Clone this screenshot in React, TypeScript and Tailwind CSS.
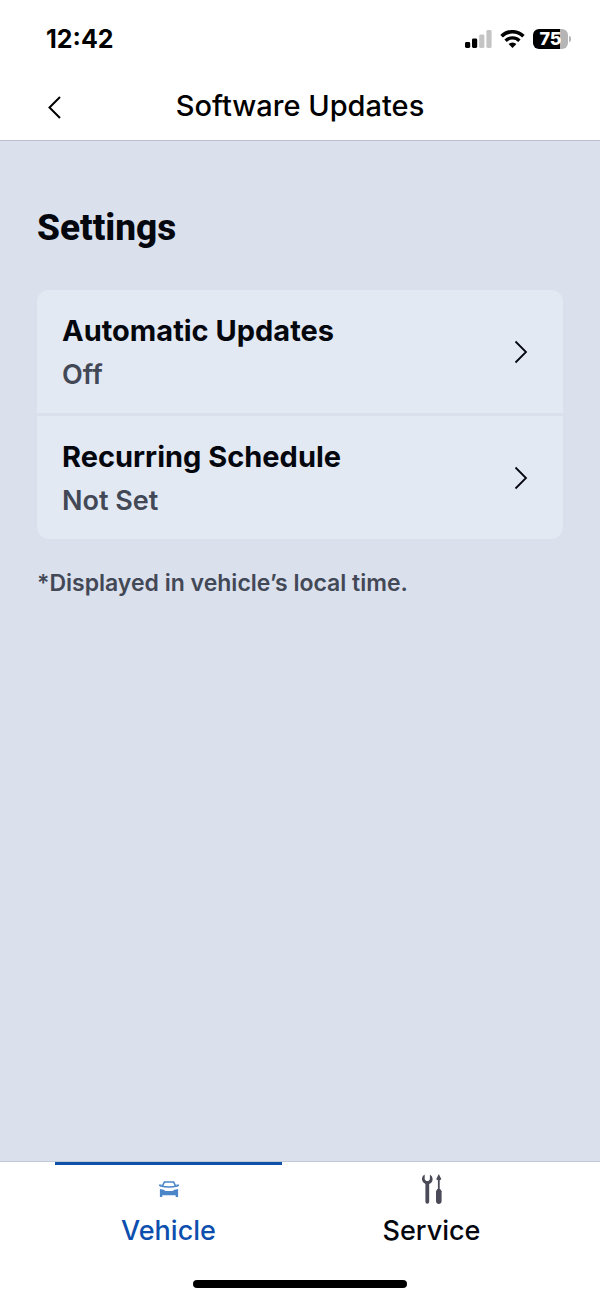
import type { ReactNode } from 'react';
import clsx from 'clsx';

const settings = [
  { title: 'Automatic Updates', value: 'Off' },
  { title: 'Recurring Schedule', value: 'Not Set' },
];

function StatusBar() {
  return (
    <div className="flex h-[74px] items-center justify-between pt-[3px] pl-[46px] pr-[29px]">
      <span className="text-[25px] leading-8 font-bold text-black">12:42</span>
      <div className="flex items-center gap-2">
        <svg className="h-[18px] w-[27px]" viewBox="0 0 27 18" aria-hidden="true">
          <rect x="0" y="12" width="5.2" height="6" rx="1.4" fill="#000" />
          <rect x="7" y="8.5" width="5.2" height="9.5" rx="1.4" fill="#000" />
          <rect x="14.2" y="4.5" width="5.2" height="13.5" rx="1.4" fill="#c4c4c4" />
          <rect x="21.4" y="0" width="5.2" height="18" rx="1.4" fill="#c4c4c4" />
        </svg>
        <svg className="h-[18px] w-[25px]" viewBox="0 0 25 18" fill="none" aria-hidden="true">
          <path d="M1.6 6.2a15.6 15.6 0 0 1 21.8 0" stroke="#000" strokeWidth="3.6" />
          <path d="M5.6 10.7a9.9 9.9 0 0 1 13.8 0" stroke="#000" strokeWidth="3.4" />
          <path d="M12.5 18l-3.9-4a5.6 5.6 0 0 1 7.8 0z" fill="#000" />
        </svg>
        <div className="flex items-center gap-px">
          <div className="flex h-5 w-[35px] items-center justify-center rounded-md bg-linear-to-r from-black from-78% to-[#b5b5b5] to-78% text-lg leading-5 font-extrabold text-white">
            75
          </div>
          <div className="h-[6px] w-[2px] rounded-r-full bg-[#b5b5b5]" />
        </div>
      </div>
    </div>
  );
}

function ChevronRight() {
  return (
    <svg className="h-6 w-4" viewBox="0 0 16 24" fill="none" stroke="#05070f" strokeWidth="1.8" aria-hidden="true">
      <path d="M2.5 1.5L13 12L2.5 22.5" />
    </svg>
  );
}

function CarIcon() {
  return (
    <svg className="h-4 w-5" viewBox="0 0 20 16" fill="#4a86c8" aria-hidden="true">
      <path d="M3.4 5.2L5.4 1H14.6L16.6 5.2" fill="none" stroke="#4a86c8" strokeWidth="1.6" />
      <path d="M0 3.5h2.8l-.5 1.1Q10 5.8 17.7 4.6l-.5-1.1H20v1.3l-1.5 1Q10 7.6 1.5 5.8L0 4.8z" />
      <path d="M.9 7.9Q5.3 8.4 6.5 9.9h7Q14.7 8.4 19.1 7.9V16h-2.4v-1.7H3.3V16H.9z" />
    </svg>
  );
}

function ToolsIcon() {
  return (
    <svg className="h-[30px] w-5" viewBox="0 0 20 30" fill="#4a4a58" aria-hidden="true">
      <path d="M2.7.4A5.3 5.3 0 0 0 3.4 10V27.8a1.9 1.9 0 0 0 3.8 0V10A5.3 5.3 0 0 0 7.9.4V5.2L6.5 7H4.1L2.7 5.2z" />
      <path d="M16.8 0L19.4 5.2L17.7 6.2V15.2H15.9V6.2L14.2 5.2z" />
      <path d="M15.4 15h2.8l1.4 2.2v9.9a2.8 2.8 0 0 1-5.6 0v-9.9z" />
    </svg>
  );
}

function Tab({ label, icon, active }: { label: string; icon: ReactNode; active?: boolean }) {
  return (
    <button
      aria-current={active ? 'page' : undefined}
      className={clsx(
        'flex flex-1 flex-col items-center border-t-[3px] pt-1.5 text-[27px] leading-9 font-medium',
        active ? 'border-[#0d52a8] text-[#0d4fae]' : 'border-transparent text-[#05070f]'
      )}
    >
      <span className="mb-1.5 flex h-9 items-center">{icon}</span>
      {label}
    </button>
  );
}

export default function App() {
  return (
    <div className="flex min-h-screen flex-col bg-[#dae0ec] font-['Inter',sans-serif]">
      <header className="border-b border-[#b9bfcc] bg-white">
        <StatusBar />
        <div className="grid h-[66px] grid-cols-[72px_1fr_72px] items-center">
          <button aria-label="Back" className="flex justify-center pl-[38px]">
            <svg className="h-6 w-4" viewBox="0 0 16 24" fill="none" stroke="#000" strokeWidth="2" aria-hidden="true">
              <path d="M13 2L2.5 12.5L13 23" />
            </svg>
          </button>
          <h1 className="pb-0.5 text-center text-[29px] leading-9 font-medium text-black">
            Software Updates
          </h1>
        </div>
      </header>

      <main className="flex-1 px-[37px] pt-16">
        <h2 className="font-['Roboto',sans-serif] text-[37px] leading-[46px] font-extrabold text-[#05070f]">Settings</h2>

        <div className="mt-[39px] flex flex-col gap-[3px] overflow-hidden rounded-xl">
          {settings.map((item) => (
            <button
              key={item.title}
              className="flex items-center justify-between bg-[#e3e9f3] py-4 pr-[34px] pl-[25px] text-left"
            >
              <span className="flex flex-col pt-[3px]">
                <span className="text-[29px] leading-[44px] font-bold text-[#05070f]">{item.title}</span>
                <span className="text-[27px] leading-[44px] font-semibold text-[#434856]">{item.value}</span>
              </span>
              <ChevronRight />
            </button>
          ))}
        </div>

        <p className="mt-7 text-[23px] leading-8 font-semibold text-[#434856]">
          *Displayed in vehicle’s local time.
        </p>
      </main>

      <footer className="border-t border-[#c3c9d4] bg-white">
        <nav className="flex gap-9 px-[55px]">
          <Tab label="Vehicle" icon={<CarIcon />} active />
          <Tab label="Service" icon={<ToolsIcon />} />
        </nav>
        <div className="mx-auto mt-[31px] mb-3 h-2 w-[214px] rounded-full bg-black" />
      </footer>
    </div>
  );
}
